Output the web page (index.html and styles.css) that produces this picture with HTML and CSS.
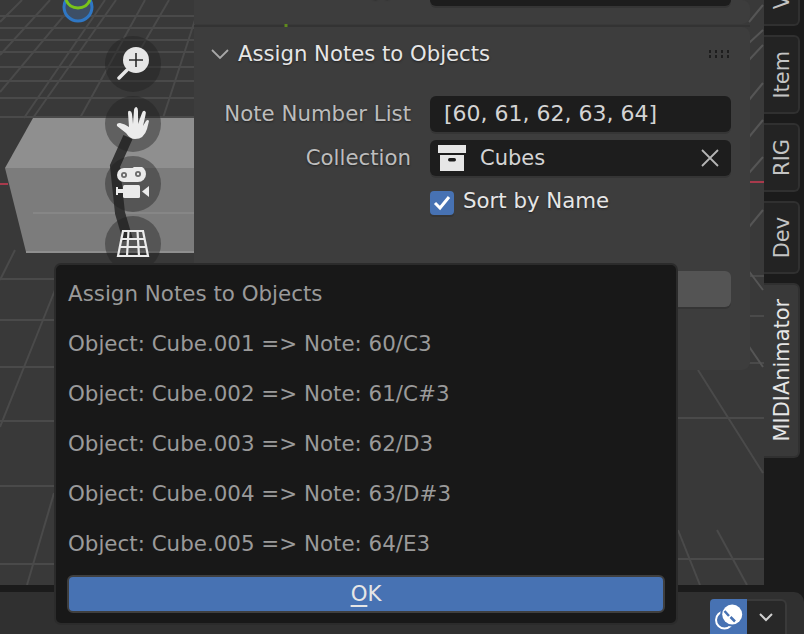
FILE: index.html
```html
<!DOCTYPE html>
<html lang="en">
<head>
    <meta charset="UTF-8">
    <title>Assign Notes to Objects</title>
    <link rel="stylesheet" href="styles.css">
</head>
<body>
    <div class="app">
        <div class="workspace">
            <div class="viewport">
                <!-- 3d scene behind everything -->
                <svg class="scene" width="764" height="585" viewBox="0 0 764 585">
                    <g stroke="#4a4a4a" stroke-width="2" fill="none">
                        <path d="M0 16H194M0 28H194M0 40H194M0 52H194M0 67H194M0 81H194M0 98H194M0 117H194"/>
                        <path d="M0 279H60M0 320H60M0 367H60M0 421H60M0 486H60M0 564H60"/>
                        <path d="M678 276H764M678 316H764M678 363H764M678 418H764M678 559H764"/>
                        <path d="M22 0L0 22M50 0L0 55M77 0L0 92M105 0L24 118M116 0L33 118M145 0L80 118M169 0L140 50M195 20L163 118"/>
                        <path d="M15 250L0 280M55 290L0 427M54 493L27 585M698 370L763 473M717 530L747 585M678 530L700 585"/>
                    </g>
                    <path d="M749 22L763 5M749 43L763 30M749 60L763 45M749 100L763 83M749 137L763 120M749 173L763 157M749 227L763 210M748 270L763 290M748 345L763 367" stroke="#555" stroke-width="2" fill="none"/>
                    <path d="M194 26H750" stroke="#333" stroke-width="2"/>
                    <path d="M286 24V28" stroke="#5f8a1c" stroke-width="3"/>
                    <path d="M0 184H8" stroke="#a83a4c" stroke-width="2"/>
                    <path d="M750 182H764" stroke="#a83a4c" stroke-width="2"/>
                    <polygon points="5,168 33,118 194,118 194,168" fill="#8f8f8f"/>
                    <polygon points="5,168 194,168 194,252 26,252" fill="#7c7c7c"/>
                    <path d="M33 213H194" stroke="#868686" stroke-width="2"/>
                    <path d="M26 252H194" stroke="#8f8f8f" stroke-width="2"/>
                    <path d="M128 137L115 166L120 213L128 240" stroke="#333" stroke-width="10" fill="none"/>
                    <circle cx="78" cy="7" r="14" fill="#3d4f66" stroke="#2f77c4" stroke-width="3"/>
                    <path d="M66 0A13 13 0 0 0 90 0" stroke="#79c41a" stroke-width="3" fill="none"/>
                </svg>

                <div class="gizmos">
                    <div class="gizmo">
                        <svg width="32" height="34" viewBox="0 0 32 34">
                            <circle cx="19" cy="13" r="13" fill="#e6e6e6"/>
                            <path d="M10 23L2 31" stroke="#e6e6e6" stroke-width="3.500" stroke-linecap="round"/>
                            <path d="M19 6V20M12 13H26" stroke="#2b2b2b" stroke-width="1.600"/>
                        </svg>
                    </div>
                    <div class="gizmo">
                        <svg width="34" height="34" viewBox="0 0 34 34">
                            <path d="M13 20L12 6Q12 3 14 4Q15.500 4 16 7L17 17L18 3Q18.500 0 20.500 0Q22 1 22 4L22 17L26 6Q27 3 29 4Q30.500 5 29.500 8L27 19L30 14Q32 12 33 14L31 22Q28 32 19 32Q14 32 10 26L1 19Q0 16 4 16Q9 17 13 20Z" fill="#ebebeb"/>
                        </svg>
                    </div>
                    <div class="gizmo">
                        <svg width="34" height="34" viewBox="0 0 34 34">
                            <circle cx="8" cy="8" r="7" fill="#ebebeb"/>
                            <circle cx="22" cy="7" r="8" fill="#ebebeb"/>
                            <path d="M8 1H22V15H8Z" fill="#ebebeb"/>
                            <circle cx="8" cy="8" r="3" fill="#6b6b6b"/>
                            <circle cx="22" cy="7" r="3" fill="#6b6b6b"/>
                            <circle cx="8" cy="8" r="1.200" fill="#ebebeb"/>
                            <circle cx="22" cy="7" r="1.200" fill="#ebebeb"/>
                            <rect x="7" y="18" width="17" height="13" rx="1.500" fill="#ebebeb"/>
                            <rect x="0" y="20" width="2" height="8" fill="#ebebeb"/>
                            <rect x="2" y="22" width="5" height="4" fill="#ebebeb"/>
                            <polygon points="26,24.500 33,19 33,30" fill="#ebebeb"/>
                        </svg>
                    </div>
                    <div class="gizmo">
                        <svg width="34" height="28" viewBox="0 0 34 28">
                            <path d="M7 1H27L32 26H2ZM12.500 1L11 26M21.500 1L23 26M5 9H29M3.500 17H30.500" fill="none" stroke="#ebebeb" stroke-width="2.200"/>
                        </svg>
                    </div>
                </div>

                <div class="sidebar">
                    <div class="panel panel-stub">
                        <div class="row row-clipped">
                            <span class="row-label">Type</span>
                            <div class="field"></div>
                        </div>
                    </div>
                    <div class="panel">
                        <div class="panel-header">
                            <svg class="chevron" width="20" height="12" viewBox="0 0 20 12">
                                <path d="M2 2L10 10L18 2" fill="none" stroke="#a8a8a8" stroke-width="1.800"/>
                            </svg>
                            <span class="panel-title">Assign Notes to Objects</span>
                            <div class="grip">
                                <i></i><i></i><i></i><i></i><i></i><i></i><i></i><i></i>
                            </div>
                        </div>
                        <div class="row">
                            <span class="row-label">Note Number List</span>
                            <div class="field field-list">[60, 61, 62, 63, 64]</div>
                        </div>
                        <div class="row">
                            <span class="row-label">Collection</span>
                            <div class="field field-collection">
                                <svg width="28" height="27" viewBox="0 0 28 27">
                                    <rect x="0" y="0" width="28" height="8" fill="#e6e6e6"/>
                                    <path d="M2 10H26V26H2Z" fill="#e6e6e6"/>
                                    <rect x="10" y="13" width="8" height="3.500" rx="1.700" fill="#1c1c1c"/>
                                </svg>
                                <span class="field-text">Cubes</span>
                                <svg width="18" height="18" viewBox="0 0 18 18">
                                    <path d="M1 1L17 17M17 1L1 17" stroke="#b5b5b5" stroke-width="1.800"/>
                                </svg>
                            </div>
                        </div>
                        <div class="row row-check">
                            <span class="checkbox">
                                <svg width="18" height="16" viewBox="0 0 18 16">
                                    <path d="M2 8L7 13L16 2" fill="none" stroke="#fff" stroke-width="3"/>
                                </svg>
                            </span>
                            <span class="check-label">Sort by Name</span>
                        </div>
                        <div class="panel-button"></div>
                    </div>
                </div>
            </div>

            <div class="tabs">
                <div class="tab tab-v"><span>V</span></div>
                <div class="tab tab-item"><span>Item</span></div>
                <div class="tab tab-rig"><span>RIG</span></div>
                <div class="tab tab-dev"><span>Dev</span></div>
                <div class="tab tab-active"><span>MIDIAnimator</span></div>
            </div>
        </div>

        <div class="footer">
            <div class="overlay-toggle">
                <svg width="30" height="35" viewBox="0 0 30 35">
                    <circle cx="10.500" cy="21" r="8.500" fill="none" stroke="#fff" stroke-width="2"/>
                    <circle cx="18.200" cy="15.500" r="12" fill="#4772b3"/>
                    <circle cx="18.200" cy="15.500" r="10" fill="#fff"/>
                    <path d="M10.500 12L15 17M16.500 18L21 22.500" stroke="#4772b3" stroke-width="2.500"/>
                </svg>
            </div>
            <div class="overlay-menu">
                <svg width="14" height="9" viewBox="0 0 14 9">
                    <path d="M1 1L7 7L13 1" fill="none" stroke="#d0d0d0" stroke-width="2"/>
                </svg>
            </div>
        </div>

        <!-- report popup, sits over the viewport and footer -->
        <div class="dialog">
            <p class="dialog-line">Assign Notes to Objects</p>
            <p class="dialog-line">Object: Cube.001 =&gt; Note: 60/C3</p>
            <p class="dialog-line">Object: Cube.002 =&gt; Note: 61/C#3</p>
            <p class="dialog-line">Object: Cube.003 =&gt; Note: 62/D3</p>
            <p class="dialog-line">Object: Cube.004 =&gt; Note: 63/D#3</p>
            <p class="dialog-line">Object: Cube.005 =&gt; Note: 64/E3</p>
            <button class="ok-button"><u>O</u>K</button>
        </div>
    </div>
</body>
</html>
```

FILE: styles.css
```css
html, body {
    height: 100%;
    margin: 0;
    overflow: hidden;
    background: #1b1b1b;
    font-family: 'DejaVu Sans', sans-serif;
}
.app {
    position: relative;
    display: flex;
    flex-direction: column;
    width: 804px;
    height: 634px;
}
.workspace {
    display: flex;
    height: 585px;
}
.viewport {
    position: relative;
    display: flex;
    width: 764px;
    background: #393939;
    overflow: hidden;
}
.scene {
    position: absolute;
    top: 0;
    left: 0;
}
.gizmos {
    position: relative;
    display: flex;
    flex-direction: column;
    gap: 4px;
    width: 56px;
    margin-left: 105px;
    padding-top: 36px;
}
.gizmo {
    display: flex;
    align-items: center;
    justify-content: center;
    width: 56px;
    height: 56px;
    border-radius: 50%;
    background: rgba(30, 30, 30, 0.42);
}
.sidebar {
    position: relative;
    display: flex;
    flex-direction: column;
    gap: 3px;
    width: 556px;
    margin-left: 33px;
    height: 370px;
}
.panel {
    flex: 1;
    box-sizing: border-box;
    padding: 0 19px 0 0;
    background: #3d3d3d;
    border-radius: 0 8px 8px 0;
}
.panel-stub {
    flex: none;
    height: 24px;
    overflow: hidden;
}
.panel-header {
    display: flex;
    align-items: center;
    height: 53px;
    padding-left: 16px;
    margin-bottom: 16px;
}
.chevron {
    margin-right: 8px;
}
.panel-title {
    flex: 1;
    color: #e6e6e6;
    font-size: 21.200px;
    text-shadow: 0 1px 2px #222;
}
.grip {
    display: grid;
    grid-template-columns: repeat(4, 2px);
    gap: 2px 4px;
    margin-right: 2px;
}
.grip i {
    width: 2px;
    height: 3px;
    background: #1e1e1e;
}
.row {
    display: flex;
    align-items: center;
    gap: 19px;
    margin-bottom: 8px;
}
.row-clipped {
    margin-top: -30px;
}
.row-label {
    width: 217px;
    padding-bottom: 2px;
    text-align: right;
    color: #bdbdbd;
    font-size: 21.300px;
    text-shadow: 0 1px 2px #222;
}
.field {
    display: flex;
    align-items: center;
    flex: 1;
    box-sizing: border-box;
    height: 36px;
    padding-left: 14px;
    border-radius: 6px;
    background: #1d1d1d;
    box-shadow: 0 2px 0 #353535;
    color: #d4d4d4;
    font-size: 21px;
}
.field-list {
    padding-bottom: 2px;
    font-size: 22px;
}
.field-collection {
    padding: 0 12px 0 8px;
}
.field-text {
    flex: 1;
    margin-left: 14px;
}
.row-check {
    justify-content: flex-start;
    margin: 14px 0 0 236px;
    gap: 9px;
}
.checkbox {
    display: flex;
    align-items: center;
    justify-content: center;
    width: 24px;
    height: 24px;
    border-radius: 4px;
    background: #4772b3;
    box-shadow: 0 2px 0 #353535;
}
.check-label {
    margin-top: -2px;
    padding-bottom: 2px;
    color: #e6e6e6;
    font-size: 21.300px;
    text-shadow: 0 1px 2px #222;
}
.panel-button {
    height: 36px;
    margin-top: 56px;
    border-radius: 6px;
    background: #545454;
    box-shadow: 0 2px 0 #353535;
}
.tabs {
    display: flex;
    flex-direction: column;
    gap: 9px;
    width: 40px;
    overflow: hidden;
}
.tab {
    display: flex;
    align-items: center;
    justify-content: center;
    flex: none;
    box-sizing: border-box;
    width: 36px;
    padding-left: 2px;
    border: 2px solid #303030;
    border-left: none;
    border-radius: 0 6px 6px 0;
    background: #232323;
    color: #c4c4c4;
    font-size: 20.900px;
}
.tab span {
    writing-mode: vertical-rl;
    transform: rotate(180deg);
}
.tab-v {
    align-items: flex-end;
    height: 62px;
    margin-top: -36px;
    padding-bottom: 15px;
}
.tab-item {
    height: 79px;
}
.tab-rig {
    height: 69px;
}
.tab-dev {
    height: 73px;
}
.tab-active {
    height: 175px;
    background: #393939;
    color: #e6e6e6;
}
.footer {
    display: flex;
    align-items: flex-start;
    justify-content: flex-end;
    flex: 1;
    margin-top: 7px;
    padding: 7px 17px 0 0;
    background: #303030;
    border-top-right-radius: 10px;
}
.overlay-toggle {
    display: flex;
    align-items: center;
    justify-content: center;
    box-sizing: border-box;
    width: 37px;
    height: 35px;
    border-radius: 4px 0 0 0;
    background: #4772b3;
}
.overlay-menu {
    display: flex;
    align-items: center;
    justify-content: center;
    box-sizing: border-box;
    width: 40px;
    height: 35px;
    border: 2px solid #3a3a3a;
    border-width: 2px 2px 0 0;
    border-radius: 0 6px 0 0;
    background: #282828;
}
.dialog {
    position: absolute;
    top: 263px;
    left: 54px;
    display: flex;
    flex-direction: column;
    box-sizing: border-box;
    width: 624px;
    height: 362px;
    padding: 5px 11px 10px;
    border: 2px solid #2b2b2b;
    border-radius: 7px;
    background: #181818;
}
.dialog-line {
    flex: none;
    height: 50px;
    margin: 0;
    padding-left: 1px;
    color: #9a9a9a;
    font-size: 21.400px;
    line-height: 48px;
}
.ok-button {
    flex: none;
    height: 38px;
    margin-top: 5px;
    padding: 0 0 2px;
    border: 2px solid #3f3f3f;
    border-radius: 6px;
    background: #4772b3;
    color: #e6e6e6;
    font-family: inherit;
    font-size: 21.300px;
}
.ok-button u {
    text-decoration-thickness: 2px;
    text-underline-offset: 4px;
}
```
